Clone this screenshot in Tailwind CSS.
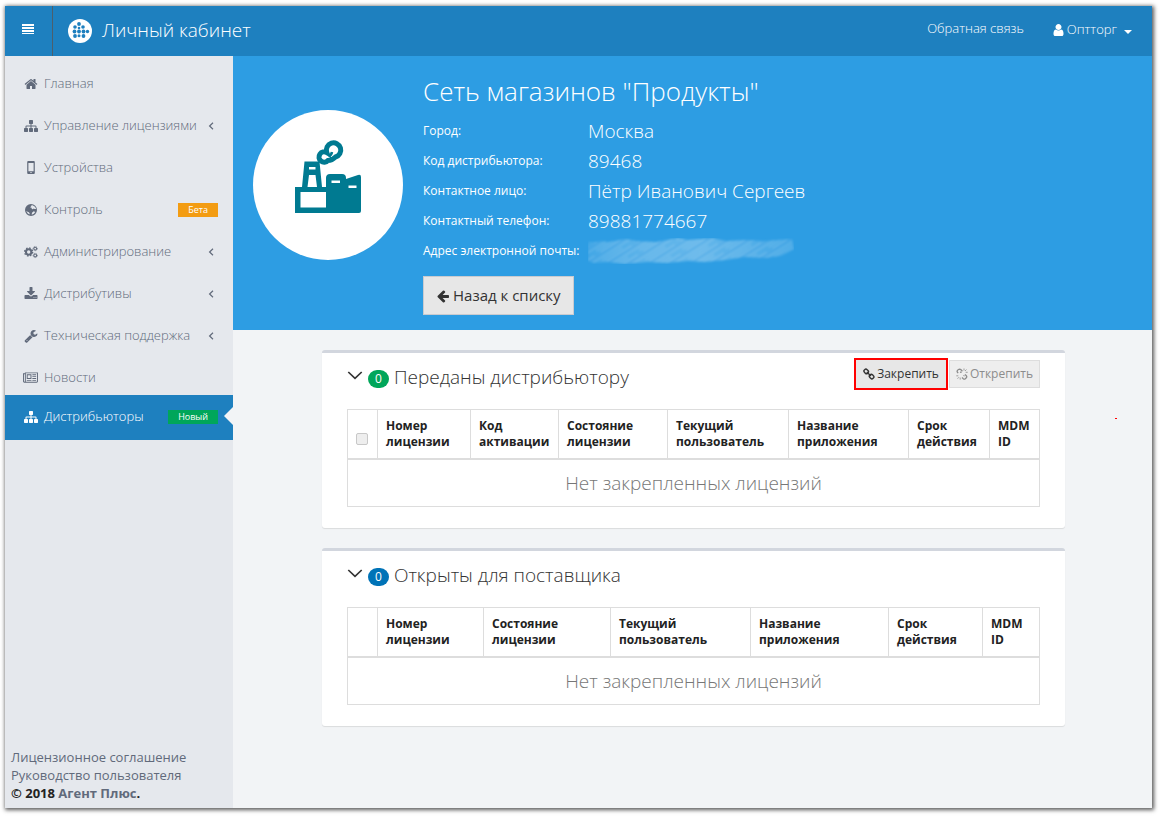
<!DOCTYPE html>
<html lang="ru">
<head>
<meta charset="utf-8">
<meta name="viewport" content="width=device-width, initial-scale=1">
<title>Личный кабинет</title>
<script src="https://cdn.jsdelivr.net/npm/@tailwindcss/browser@4"></script>
</head>
<body class="flex min-h-screen flex-col bg-white pt-[6px] pr-[9px] pb-[9px] pl-[5px] font-['Open_Sans',sans-serif] text-[13px] font-light text-[#333]">
<svg class="hidden" aria-hidden="true">
  <symbol id="home" viewBox="0 0 1792 1792"><path d="M1472 992v480q0 26-19 45t-45 19h-384v-384h-256v384h-384q-26 0-45-19t-19-45v-480q0-1 .5-3t.5-3l575-474 575 474q1 2 1 6zm223-69l-62 74q-8 9-21 11h-3q-13 0-21-7l-692-577-692 577q-12 8-24 7-13-2-21-11l-62-74q-8-10-7-23.5t11-21.5l719-599q32-26 76-26t76 26l244 204v-195q0-14 9-23t23-9h192q14 0 23 9t9 23v408l219 182q10 8 11 21.5t-7 23.5z"/></symbol>
  <symbol id="sitemap" viewBox="0 0 1792 1792"><path d="M1792 1248v320q0 40-28 68t-68 28h-320q-40 0-68-28t-28-68v-320q0-40 28-68t68-28h96v-192h-512v192h96q40 0 68 28t28 68v320q0 40-28 68t-68 28h-320q-40 0-68-28t-28-68v-320q0-40 28-68t68-28h96v-192h-512v192h96q40 0 68 28t28 68v320q0 40-28 68t-68 28h-320q-40 0-68-28t-28-68v-320q0-40 28-68t68-28h96v-192q0-52 38-90t90-38h512v-192h-96q-40 0-68-28t-28-68v-320q0-40 28-68t68-28h320q40 0 68 28t28 68v320q0 40-28 68t-68 28h-96v192h512q52 0 90 38t38 90v192h96q40 0 68 28t28 68z"/></symbol>
  <symbol id="mobile" viewBox="0 0 14 14"><path fill-rule="evenodd" d="M4.200 0h5.600q1 0 1 1v11q0 1-1 1H4.200q-1 0-1-1V1q0-1 1-1zM4.400 1.900v8.400h5.200V1.900zM6.400 11.100v1h1.200v-1z"/></symbol>
  <symbol id="globe" viewBox="0 0 14 14"><path fill-rule="evenodd" d="M7 1a6 6 0 1 1 0 12A6 6 0 0 1 7 1zM8.300 2.200L6.800 2.700l.4.700-.7.300-.2.800 1.300.2.200 1.200 1.200.3.500-.7 1.200.6 1.300-.2-.2-.900q-.7-1.900-3.200-2.800zM8 9.800l-.3 1.900q2.400-.3 3.600-2.600l-1.600-.9zM2.300 7.700l.5 1.400q.9 1.900 2.600 2.500l.3-1.100-.8-1.200-1.400-.6z"/></symbol>
  <symbol id="cogs" viewBox="0 0 15 14"><g fill="none" stroke="currentColor"><circle cx="5" cy="7" r="2.900" stroke-width="2.200"/><circle cx="5" cy="7" r="4.300" stroke-width="1.400" stroke-dasharray="1.690 1.690"/><circle cx="12" cy="3.300" r="1.500" stroke-width="1.100"/><circle cx="12" cy="3.300" r="2.300" stroke-width=".8" stroke-dasharray="1.030 1.030"/><circle cx="12" cy="10.700" r="1.500" stroke-width="1.100"/><circle cx="12" cy="10.700" r="2.300" stroke-width=".8" stroke-dasharray="1.030 1.030"/></g></symbol>
  <symbol id="download" viewBox="0 0 1792 1792"><path d="M1344 1344q0-26-19-45t-45-19-45 19-19 45 19 45 45 19 45-19 19-45zm256 0q0-26-19-45t-45-19-45 19-19 45 19 45 45 19 45-19 19-45zm128-224v320q0 40-28 68t-68 28h-1472q-40 0-68-28t-28-68v-320q0-40 28-68t68-28h465l135 136q58 56 136 56t136-56l136-136h464q40 0 68 28t28 68zm-325-569q17 41-14 70l-448 448q-18 19-45 19t-45-19l-448-448q-31-29-14-70 17-39 59-39h256v-448q0-26 19-45t45-19h256q26 0 45 19t19 45v448h256q42 0 59 39z"/></symbol>
  <symbol id="wrench" viewBox="0 0 1792 1792"><path d="M448 1472q0-26-19-45t-45-19-45 19-19 45 19 45 45 19 45-19 19-45zm644-420l-682 682q-37 37-90 37-52 0-91-37l-106-108q-38-36-38-90 0-53 38-91l681-681q39 98 114.500 173.500t173.500 114.500zm634-435q0 39-23 106-47 134-164.500 217.500t-258.500 83.500q-185 0-316.500-131.500t-131.500-316.500 131.500-316.500 316.500-131.500q58 0 121.500 16.500t107.500 46.500q16 11 16 28t-16 28l-293 169v224l193 107q5-3 79-48.500t135.500-81 70.500-35.500q15 0 23.500 10t8.500 25z"/></symbol>
  <symbol id="news" viewBox="0 0 2048 1792"><path d="M1024 512h-384v384h384v-384zm128 640v128h-640v-128h640zm0-768v640h-640v-640h640zm640 768v128h-512v-128h512zm0-256v128h-512v-128h512zm0-256v128h-512v-128h512zm0-256v128h-512v-128h512zm-1536 960v-960h-128v960q0 26 19 45t45 19 45-19 19-45zm1664 0v-1088h-1536v1088q0 33-11 64h1483q26 0 45-19t19-45zm128-1216v1216q0 80-56 136t-136 56h-1664q-80 0-136-56t-56-136v-1088h256v-128h1792z"/></symbol>
  <symbol id="user" viewBox="192 128 1408 1536"><path d="M1536 1399q0 109-62.500 187t-150.500 78h-854q-88 0-150.500-78t-62.500-187q0-85 8.500-160.500t31.500-152 58.500-131 94-89 134.500-34.500q131 128 313 128t313-128q76 0 134.500 34.500t94 89 58.500 131 31.500 152 8.500 160.500zm-256-887q0 159-112.500 271.500t-271.500 112.500-271.500-112.500-112.500-271.500 112.500-271.500 271.500-112.500 271.500 112.500 112.500 271.500z"/></symbol>
  <symbol id="back" viewBox="0 0 1792 1792"><path d="M1664 896v128q0 53-32.500 90.500t-84.500 37.500h-704l293 294q38 36 38 90t-38 90l-75 76q-37 37-90 37-52 0-91-37l-651-652q-37-37-37-90 0-52 37-91l651-650q38-38 91-38 52 0 90 38l75 74q38 38 38 91t-38 91l-293 293h704q52 0 84.500 37.500t32.500 90.500z"/></symbol>
  <symbol id="chain" viewBox="0 0 12 12"><g fill="none" stroke="currentColor" stroke-width="1.400"><rect x="-2.300" y="-1.900" width="4.600" height="3.800" rx="1.700" transform="translate(3.200 3.400) rotate(45)"/><rect x="-2.300" y="-1.900" width="4.600" height="3.800" rx="1.700" transform="translate(8.600 8.600) rotate(45)"/><path d="M3.800 4l4.200 4"/></g></symbol>
  <symbol id="unchain" viewBox="0 0 12 12"><g fill="none" stroke="currentColor" stroke-width="1.300"><path d="M2.200 5.200L1.500 4.300Q.7 3.300 1.500 2.300T3.600 1.200q.8 0 1.400.6l1.400 1.400M6 9.500l1.300 1.200q1 .8 2 0l1-1q.9-1 0-2L9 6.400M5.600 4.300L4 4.100M7.700 8.200L8.300 7.300"/><path stroke-width=".8" d="M8 .5v2M10.500 1.500L9 3M11.700 4.300H9.700M.3 7.800h2M1.500 10.700L3 9.200M4.200 11.600v-2"/></g></symbol>
  <symbol id="left" viewBox="0 0 6 8"><path fill="none" stroke="currentColor" stroke-width="1.200" d="M5 .8L1.600 4 5 7.200"/></symbol>
  <symbol id="down" viewBox="0 0 16 9"><path fill="none" stroke="currentColor" stroke-width="1.700" d="M1.300 1L8 7.300 14.700 1"/></symbol>
</svg>

<div class="relative flex flex-1 flex-col shadow-[1px_1px_4px_1px_rgba(0,0,0,0.65)]">
  <header class="flex h-[50px] items-stretch bg-[#1e80bf] text-white">
    <button type="button" aria-label="Меню" class="flex w-12 items-center justify-center border-r border-[#4b5f6c] pr-[2px] pb-1">
      <svg class="h-3 w-3" viewBox="0 0 12 12" fill="currentColor"><path d="M0 1h12v2H0zM0 4h12v2H0zM0 7h12v2H0zM0 10h12v1H0z"/></svg>
    </button>
    <a href="#" class="flex items-center gap-[10px] pl-[15px] text-[19px]">
      <svg class="h-6 w-6" viewBox="0 0 24 24"><circle cx="12" cy="12" r="12" fill="#fff"/><g fill="#1e80bf"><circle cx="11" cy="5" r="1.900"/><circle cx="7" cy="8" r="1.800"/><circle cx="15" cy="8" r="1.800"/><circle cx="11" cy="9" r="1.300"/><circle cx="6.500" cy="12.500" r="1.900"/><circle cx="11" cy="12.500" r="1.900"/><circle cx="15.500" cy="12.500" r="1.900"/><circle cx="19.500" cy="12.500" r="1.700"/><circle cx="7" cy="17" r="1.900"/><circle cx="11" cy="16.800" r="1.500"/><circle cx="15.500" cy="17" r="1.900"/></g></svg>
      <span class="pb-[2px]">Личный кабинет</span>
    </a>
    <nav class="ml-auto flex items-center gap-[29px] pr-5">
      <a href="#" class="pb-1">Обратная связь</a>
      <button type="button" class="flex items-center gap-[3px] pb-[2px]"><svg class="h-3 w-[11px]" fill="currentColor"><use href="#user"/></svg>Оптторг<svg class="mt-1 ml-1 h-1 w-2" viewBox="0 0 8 4" fill="currentColor"><path d="M0 0h8L4 4z"/></svg></button>
    </nav>
  </header>

  <div class="flex flex-1">
    <aside class="flex w-[228px] shrink-0 flex-col bg-[#e5e8ed] text-[#616a7b]">
      <ul class="flex h-[339px] flex-col gap-[6px] pt-[10px]">
        <li><a href="#" class="flex h-9 items-center gap-[6px] pr-[19px] pl-[19px]"><svg class="h-[14px] w-[14px]" fill="currentColor"><use href="#home"/></svg>Главная</a></li>
        <li><a href="#" class="flex h-9 items-center gap-[6px] pr-[19px] pl-[19px]"><svg class="h-[14px] w-[14px]" fill="currentColor"><use href="#sitemap"/></svg>Управление лицензиями<svg class="ml-auto h-2 w-[6px]"><use href="#left"/></svg></a></li>
        <li><a href="#" class="flex h-9 items-center gap-[6px] pr-[19px] pl-[19px]"><svg class="h-[14px] w-[14px]" fill="currentColor"><use href="#mobile"/></svg>Устройства</a></li>
        <li><a href="#" class="flex h-9 items-center gap-[6px] pr-[15px] pl-[19px]"><svg class="h-[14px] w-[14px]" fill="currentColor"><use href="#globe"/></svg>Контроль<span class="ml-auto bg-[#f39c12] px-[10px] text-[9px] leading-[14px] font-medium text-white">Бета</span></a></li>
        <li><a href="#" class="flex h-9 items-center gap-[6px] pr-[19px] pl-[19px]"><svg class="h-[14px] w-[14px]" fill="currentColor"><use href="#cogs"/></svg>Администрирование<svg class="ml-auto h-2 w-[6px]"><use href="#left"/></svg></a></li>
        <li><a href="#" class="flex h-9 items-center gap-[6px] pr-[19px] pl-[19px]"><svg class="h-[14px] w-[14px]" fill="currentColor"><use href="#download"/></svg>Дистрибутивы<svg class="ml-auto h-2 w-[6px]"><use href="#left"/></svg></a></li>
        <li><a href="#" class="flex h-9 items-center gap-[6px] pr-[19px] pl-[19px]"><svg class="h-[14px] w-[14px]" fill="currentColor"><use href="#wrench"/></svg>Техническая поддержка<svg class="ml-auto h-2 w-[6px]"><use href="#left"/></svg></a></li>
        <li><a href="#" class="flex h-9 items-center gap-[6px] pr-[19px] pl-[18px]"><svg class="h-[14px] w-[15px]" fill="currentColor"><use href="#news"/></svg>Новости</a></li>
      </ul>
      <a href="#" aria-current="page" class="relative flex h-[45px] items-center gap-[6px] bg-[#1e80bf] pr-[15px] pb-[2px] pl-[19px] text-white"><svg class="h-[14px] w-[14px]" fill="currentColor"><use href="#sitemap"/></svg>Дистрибьюторы<span class="ml-auto bg-[#00a65a] px-[10px] text-[9px] leading-[14px] font-medium">Новый</span><svg class="absolute top-3 right-0 h-[18px] w-[9px]" viewBox="0 0 9 18"><path fill="#f2f4f6" d="M9 0v18L0 9z"/></svg></a>
      <footer class="mt-auto flex flex-col pb-[6px] pl-[6px] leading-[18px] font-normal">
        <a href="#">Лицензионное соглашение</a>
        <a href="#">Руководство пользователя</a>
        <p class="font-bold text-[#222]">© 2018 <a href="#" class="text-[#616a7b]">Агент Плюс</a>.</p>
      </footer>
    </aside>

    <main class="min-w-0 flex-1 bg-[#f2f4f6]">
      <section class="flex items-start gap-5 bg-[#2d9de3] px-5 pt-[17px] pb-[15px] text-white">
        <div class="mt-[37px] flex h-[150px] w-[150px] shrink-0 rounded-full bg-white">
          <svg class="h-full w-full" viewBox="0 0 150 150"><path fill="#007a91" fill-rule="evenodd" d="M42 103V77h7l2.500-25.500h15L69 77h4V68q0-4 4-4h12q4 0 4 4v1l12-4q3-1 3 2v34q0 2-2 2zM47.500 82v15.500H73V82zM54.500 77H64l-1.500-12h-6.500zM56 57v2.500h6.500V57zM78.500 70.500v2.500h8.500v-2.500zM95.500 75.500v2.500h8v-2.500z"/>
            <g fill="none" stroke="#007a91"><path stroke-width="5" d="M73.800 42.500A7.200 7.200 0 1 1 82.500 47Q79 50.500 75 50.500A5.200 5.200 0 1 1 73.800 42.500z"/><path stroke-width="2.500" d="M75.500 45.500q3 0 3.500-3.500"/></g></svg>
        </div>
        <div class="min-w-0">
          <h1 class="mb-[7px] text-[26px] leading-9">Сеть магазинов "Продукты"</h1>
          <dl class="grid grid-cols-[165px_auto] auto-rows-[30px] items-center">
            <dt class="text-[12px] font-medium">Город:</dt><dd class="text-[19px]">Москва</dd>
            <dt class="text-[12px] font-medium">Код дистрибьютора:</dt><dd class="text-[19px]">89468</dd>
            <dt class="text-[12px] font-medium">Контактное лицо:</dt><dd class="text-[19px]">Пётр Иванович Сергеев</dd>
            <dt class="text-[12px] font-medium">Контактный телефон:</dt><dd class="text-[19px]">89881774667</dd>
            <dt class="text-[12px] font-medium whitespace-nowrap">Адрес электронной почты:</dt>
            <dd><svg class="h-[26px] w-[206px]" viewBox="0 0 206 26" role="img" aria-label="Адрес скрыт">
              <defs>
                <clipPath id="smear"><path d="M0 4h8l6-1 6 1 18-3 10 2 20 1 22-4 10 2 24-2 14 3 20-1 18 1 28-2 2 10-14 7-14 2-22-1-18 3-22 2-16-1-22 2-18-1-24 2-16-2-14 1-8-3-8 1z"/></clipPath>
                <linearGradient id="fade"><stop offset="0" stop-color="#fff" stop-opacity=".1"/><stop offset=".25" stop-color="#fff" stop-opacity=".22"/><stop offset=".55" stop-color="#fff" stop-opacity=".26"/><stop offset="1" stop-color="#fff" stop-opacity=".1"/></linearGradient>
                <pattern id="hatch" width="37" height="11" patternUnits="userSpaceOnUse" patternTransform="rotate(-32)"><path stroke="#fff" stroke-opacity=".2" d="M0 1.500h37M3 7.500h30"/><path stroke="#fff" stroke-opacity=".12" stroke-width="2" d="M0 4.500h24"/><path stroke="#2d9de3" stroke-opacity=".4" d="M0 9.500h37"/></pattern>
                <filter id="soft"><feGaussianBlur stdDeviation=".8"/></filter>
              </defs>
              <g filter="url(#soft)"><g clip-path="url(#smear)"><path fill="url(#fade)" d="M0 0h206v26H0z"/><path fill="url(#hatch)" d="M0 0h206v26H0z"/></g></g>
            </svg></dd>
          </dl>
          <button type="button" class="mt-[10px] flex h-[39px] items-center gap-[3px] border border-[#c9cbd0] bg-[#e7e7e7] px-3 text-[15px] font-normal text-[#333]"><svg class="h-[14px] w-[14px]" fill="currentColor"><use href="#back"/></svg>Назад к списку</button>
        </div>
      </section>

      <div class="mx-auto flex max-w-[745px] flex-col gap-5 pt-5 pl-[2px]">
        <section class="rounded-[3px] border-t-[3px] border-[#d2d6de] bg-white px-[25px] pb-[21px] shadow-[0_1px_1px_rgba(0,0,0,0.1)]">
          <div class="flex h-14 items-start justify-between">
            <h2 class="flex items-center gap-[5px] pt-[11px] text-[19px] leading-[26px]"><button type="button" aria-label="Свернуть" class="mb-1"><svg class="h-[9px] w-4"><use href="#down"/></svg></button><span class="mt-1 rounded-full bg-[#00a65a] px-[7px] text-[12px] leading-[18px] font-normal text-white">0</span>Переданы дистрибьютору</h2>
            <div class="flex items-start gap-[1px] pt-[5px]">
              <button type="button" class="flex h-8 items-center gap-[2px] border-2 border-[#f00] bg-[#e7e7e7] px-[7px] text-[12px] font-normal text-[#333]"><svg class="h-3 w-3"><use href="#chain"/></svg>Закрепить</button>
              <button type="button" disabled class="mt-[2px] flex h-7 items-center gap-[2px] border border-[#ddd] bg-[#eee] px-[6px] text-[12px] font-normal text-[#8c8c8c]"><svg class="h-3 w-3"><use href="#unchain"/></svg>Открепить</button>
            </div>
          </div>
          <table class="w-full table-fixed border-collapse border border-[#ddd] text-left">
            <colgroup><col class="w-[30px]"><col class="w-[93px]"><col class="w-[88px]"><col class="w-[109px]"><col class="w-[121px]"><col class="w-[120px]"><col class="w-[81px]"><col></colgroup>
            <thead class="border-b-2 border-[#ddd] text-[12px] leading-4 text-[#222]">
              <tr class="h-[49px] [&>th]:border-r [&>th]:border-[#ddd] [&>th]:pl-2 [&>th]:font-bold">
                <th><input type="checkbox" disabled aria-label="Выбрать все" class="mt-[10px] block h-3 w-3 appearance-none rounded-[2px] border border-[#c8c8c8] bg-[#eee]"></th>
                <th>Номер лицензии</th><th>Код активации</th><th>Состояние лицензии</th><th>Текущий пользователь</th><th>Название приложения</th><th>Срок действия</th><th>MDM<br>ID</th>
              </tr>
            </thead>
            <tbody><tr class="h-12"><td colspan="8" class="text-center text-[19px] text-[#777]">Нет закрепленных лицензий</td></tr></tbody>
          </table>
        </section>

        <section class="rounded-[3px] border-t-[3px] border-[#d2d6de] bg-white px-[25px] pb-[21px] shadow-[0_1px_1px_rgba(0,0,0,0.1)]">
          <div class="flex h-14 items-start justify-between">
            <h2 class="flex items-center gap-[5px] pt-[11px] text-[19px] leading-[26px]"><button type="button" aria-label="Свернуть" class="mb-1"><svg class="h-[9px] w-4"><use href="#down"/></svg></button><span class="mt-1 rounded-full bg-[#0073b7] px-[7px] text-[12px] leading-[18px] font-normal text-white">0</span>Открыты для поставщика</h2>
          </div>
          <table class="w-full table-fixed border-collapse border border-[#ddd] text-left">
            <colgroup><col class="w-[30px]"><col class="w-[106px]"><col class="w-[127px]"><col class="w-[140px]"><col class="w-[138px]"><col class="w-[94px]"><col></colgroup>
            <thead class="border-b-2 border-[#ddd] text-[12px] leading-4 text-[#222]">
              <tr class="h-[49px] [&>th]:border-r [&>th]:border-[#ddd] [&>th]:pl-2 [&>th]:font-bold">
                <th></th><th>Номер<br>лицензии</th><th>Состояние лицензии</th><th>Текущий пользователь</th><th>Название приложения</th><th>Срок<br>действия</th><th>MDM<br>ID</th>
              </tr>
            </thead>
            <tbody><tr class="h-12"><td colspan="7" class="text-center text-[19px] text-[#777]">Нет закрепленных лицензий</td></tr></tbody>
          </table>
        </section>
      </div>
    </main>
  </div>
  <span class="absolute top-[412px] right-[35px] h-px w-[2px] bg-[#f00]"></span>
</div>
</body>
</html>
